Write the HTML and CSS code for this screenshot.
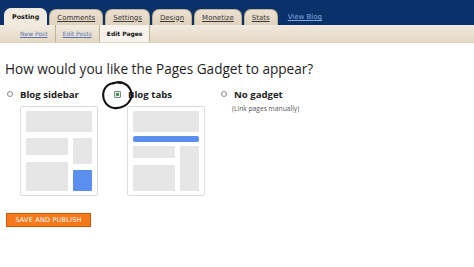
FILE: index.html
```html
<!DOCTYPE html>
<html>
<head>
<meta charset="utf-8">
<link rel="stylesheet" href="styles.css">
</head>
<body>
<div class="page">
  <nav class="topbar">
    <a class="tab active">Posting</a>
    <a class="tab">Comments</a>
    <a class="tab">Settings</a>
    <a class="tab">Design</a>
    <a class="tab">Monetize</a>
    <a class="tab">Stats</a>
    <a class="viewblog">View Blog</a>
  </nav>
  <nav class="subbar">
    <a class="sub">New Post</a>
    <a class="sub">Edit Posts</a>
    <a class="sub current">Edit Pages</a>
  </nav>
  <main class="content">
    <h1 class="title">How would you like the Pages Gadget to appear?</h1>
    <div class="options">
      <div class="option">
        <label class="choice"><span class="radio"></span>Blog sidebar</label>
        <div class="preview">
          <div class="blk top"></div>
          <div class="cols">
            <div class="col-main">
              <div class="blk m1"></div>
              <div class="blk m2"></div>
            </div>
            <div class="col-side">
              <div class="blk s1"></div>
              <div class="blk s2 blue"></div>
            </div>
          </div>
        </div>
      </div>
      <div class="option">
        <label class="choice"><span class="radio checked"></span>Blog tabs</label>
        <div class="preview tabs-layout">
          <div class="blk top"></div>
          <div class="blk tabsbar blue"></div>
          <div class="cols">
            <div class="col-main">
              <div class="blk t1"></div>
              <div class="blk t2"></div>
            </div>
            <div class="col-side">
              <div class="blk tall"></div>
            </div>
          </div>
        </div>
      </div>
      <div class="option">
        <label class="choice"><span class="radio"></span>No gadget</label>
        <p class="note">(Link pages manually)</p>
      </div>
    </div>
    <button class="publish">SAVE AND PUBLISH</button>
  </main>
  <svg class="scribble" width="34" height="31" viewBox="0 0 34 31">
    <path d="M20 3 C12 1 4 5 2.5 12 C1 19 5 27 13 28 C20 29 28 25 30.5 17 C31.5 11 28 5 21 2.5 C18 1.5 15 2 12 3.5" fill="none" stroke="#111" stroke-width="2.1" stroke-linecap="round"/>
  </svg>
</div>
</body>
</html>
```
FILE: styles.css
```css
* { box-sizing: border-box; }
html, body { margin: 0; padding: 0; background: #fff; }
.page { position: relative; width: 474px; height: 267px; overflow: hidden; }

.topbar {
  height: 25px;
  background: #0a3169;
  display: flex;
  align-items: flex-end;
  gap: 2px;
  padding-left: 4px;
  font-family: "DejaVu Sans", sans-serif;
  font-size: 7px;
}
.tab {
  height: 16px;
  padding: 0 7px;
  display: flex;
  align-items: center;
  background: linear-gradient(#ebe1d1, #e0d3bd);
  border: 1px solid #bfae90;
  border-bottom: none;
  border-radius: 7px 7px 0 0;
  color: #3a3a3a;
  text-decoration: underline;
}
.tab.active {
  height: 17px;
  padding: 0 7px;
  font-size: 6.4px;
  background: #f1eadf;
  color: #111;
  font-weight: bold;
  text-decoration: none;
  border-color: #f1eadf;
}
.viewblog {
  margin-left: 8px;
  height: 16px;
  display: flex;
  align-items: center;
  color: #86ace0;
  text-decoration: underline;
}

.subbar {
  height: 18px;
  background: linear-gradient(#f1eadf, #e4d8c5);
  border-bottom: 1px solid #e0d4c0;
  display: flex;
  padding-left: 13px;
  font-family: "DejaVu Sans", sans-serif;
  font-size: 6px;
}
.sub {
  display: flex;
  align-items: center;
  padding: 0 7px;
  border-right: 1px solid #c4b393;
  color: #5a77b0;
  text-decoration: underline;
}
.sub.current {
  background: #f7f3ec;
  color: #111;
  font-weight: bold;
  text-decoration: none;
}

.content {
  padding: 0 5px;
  font-family: "Open Sans", sans-serif;
  color: #222;
}
.title {
  margin: 17px 0 0;
  font-size: 13.6px;
  font-weight: normal;
  line-height: 18px;
  color: #1e1e1e;
}
.options {
  display: grid;
  grid-template-columns: 107px 107px 107px;
  margin-top: 9px;
  padding-left: 2px;
}
.choice {
  display: flex;
  align-items: center;
  gap: 7px;
  height: 14px;
  font-size: 9.6px;
  font-weight: bold;
  color: #222;
}
.radio {
  width: 6px;
  height: 6px;
  border: 1px solid #8a8a8a;
  border-radius: 50%;
}
.radio.checked {
  width: 7px;
  height: 7px;
  border-radius: 1px;
  border-color: #7a8a7a;
  background: radial-gradient(circle, #3d8f55 0 1.4px, #e8efe8 1.6px);
}
.note {
  margin: 3px 0 0 11px;
  font-size: 6.7px;
  line-height: 10px;
  color: #555;
}
.preview {
  margin: 5px 0 0 13px;
  width: 78px;
  height: 90px;
  border: 1px solid #dcdcdc;
  border-radius: 2px;
  padding: 4px 5px;
  display: flex;
  flex-direction: column;
  gap: 6px;
}
.preview.tabs-layout { gap: 4px; }
.blk { background: #e6e6e6; border-radius: 1px; }
.blk.blue { background: #5a8ff0; }
.top { height: 21px; }
.cols { display: flex; gap: 5px; flex: 1; }
.col-main { width: 42px; display: flex; flex-direction: column; gap: 7px; }
.col-side { flex: 1; display: flex; flex-direction: column; gap: 6px; }
.m1 { height: 17px; }
.m2 { flex: 1; }
.s1 { height: 26px; }
.s2 { flex: 1; }
.tabsbar { height: 6px; border-radius: 2px; }
.t1 { height: 12px; }
.t2 { flex: 1; }
.tall { flex: 1; }

.publish {
  display: block;
  margin-top: 17px;
  margin-left: 1px;
  width: 85px;
  height: 14px;
  padding: 0;
  background: #f5781c;
  border: 1px solid #c85a0a;
  color: #fff;
  font-family: "DejaVu Sans", sans-serif;
  font-size: 6.5px;
  letter-spacing: 0.2px;
  line-height: 12px;
}

.scribble {
  position: absolute;
  left: 101px;
  top: 80px;
}
```
